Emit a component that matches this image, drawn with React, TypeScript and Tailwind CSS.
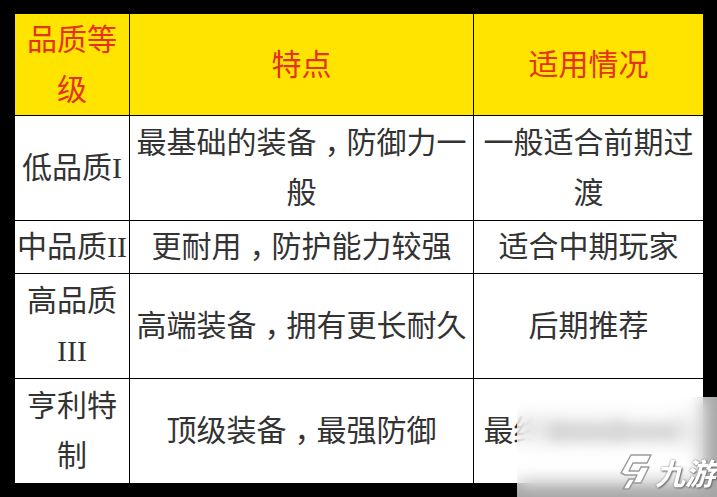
import { Fragment } from 'react';

// "\n" marks where the source table wraps the cell
const rows: { grade: string; feature: string; usage: string }[] = [
  { grade: '低品质I', feature: '最基础的装备，防御力一\n般', usage: '一般适合前期过渡' },
  { grade: '中品质II', feature: '更耐用，防护能力较强', usage: '适合中期玩家' },
  { grade: '高品质III', feature: '高端装备，拥有更长耐久', usage: '后期推荐' },
  { grade: '亨利特制', feature: '顶级装备，最强防御', usage: '最终极玩家之选' },
];

// the full-width comma sits centred in its box in the source font:
// half-width it with "halt" and pad it back out to a full em
function withComma(text: string) {
  const parts = text.split('，');
  return parts.map((p, i) => (
    <Fragment key={i}>
      {p}
      {i < parts.length - 1 && <span className="ml-[8px] mr-[7px] [font-feature-settings:'halt']">，</span>}
    </Fragment>
  ));
}

function feature(text: string) {
  return text.split('\n').map((line, i) => (
    <Fragment key={i}>
      {i > 0 && <br />}
      {withComma(line)}
    </Fragment>
  ));
}

function Cell({ children, head = false }: { children: React.ReactNode; head?: boolean }) {
  return (
    <div
      className={
        'flex items-center justify-center px-[2px] text-center text-[30px] leading-[50px] ' +
        (head ? 'bg-[#ffe400] text-[#e5321c]' : 'bg-white text-[#333333]')
      }
    >
      <p className="w-full">{children}</p>
    </div>
  );
}

function Watermark() {
  return (
    <div className="absolute left-[517px] top-[397px] h-[100px] w-[200px] overflow-hidden bg-white/65 backdrop-blur-[9px]">
      <div className="absolute left-[30px] top-[28px] h-[14px] w-[130px] rounded-full bg-[#d4d4d4] blur-[6px]" />
      <div className="absolute bottom-[6px] right-[2px] flex items-center gap-[2px]">
        <svg width="34" height="38" viewBox="0 0 34 38">
          <path
            d="M12 2 L32 2 L28 10 L14 10 L10 18 L20 18 L22 14 L30 14 L22 30 L14 30 L18 22 L6 22 L2 20 Z M10 26 L16 26 L10 36 L4 36 Z"
            fill="#ffffff"
            stroke="#9a9a9a"
            strokeWidth="1.5"
            strokeLinejoin="round"
          />
        </svg>
        <span
          className="text-[30px] font-bold italic leading-none text-white [text-shadow:0_0_2px_#777,1px_1px_2px_#666]"
          style={{ fontFamily: '"Noto Sans CJK SC", sans-serif' }}
        >
          九游
        </span>
      </div>
    </div>
  );
}

export default function App() {
  return (
    <div
      className="relative h-[497px] w-[717px] overflow-hidden bg-black pl-[14px] pt-[13px]"
      style={{ fontFamily: '"Liberation Serif", "Noto Sans CJK SC", serif' }}
    >
      <div className="grid w-fit grid-cols-[114px_343px_229px] grid-rows-[101px_104px_52px_104px_104px] gap-px bg-black p-px">
        <Cell head>品质等级</Cell>
        <Cell head>特点</Cell>
        <Cell head>适用情况</Cell>
        {rows.map(r => (
          <Fragment key={r.grade}>
            <Cell>{r.grade}</Cell>
            <Cell>{feature(r.feature)}</Cell>
            <Cell>{r.usage}</Cell>
          </Fragment>
        ))}
      </div>
      <Watermark />
    </div>
  );
}
